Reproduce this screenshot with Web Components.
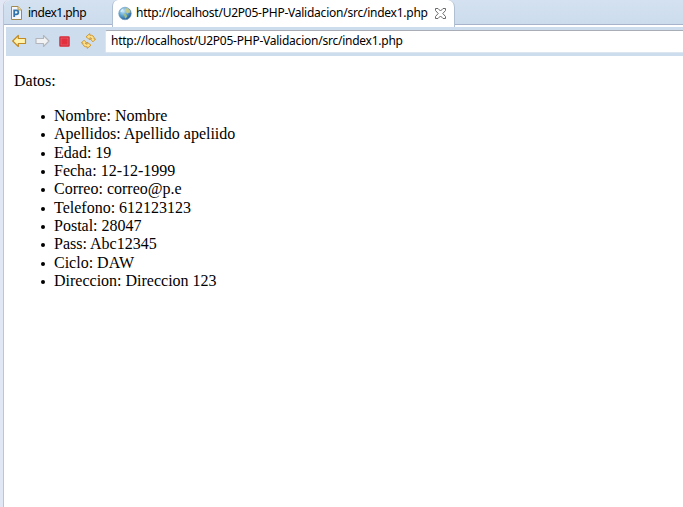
<!DOCTYPE html>
<html lang="es">
<head>
<meta charset="utf-8">
<title>index1.php</title>
<style>
html, body { margin: 0; height: 100%; overflow: hidden; background: #fff; }
</style>
</head>
<body>
<ide-window>
  <tab-bar slot="tabs">
    <editor-tab><ui-icon name="php" slot="icon"></ui-icon>index1.php</editor-tab>
    <editor-tab active><ui-icon name="globe" slot="icon"></ui-icon>http://localhost/U2P05-PHP-Validacion/src/index1.php<ui-icon name="close" slot="close"></ui-icon></editor-tab>
  </tab-bar>
  <nav-bar slot="toolbar" url="http://localhost/U2P05-PHP-Validacion/src/index1.php">
    <ui-icon name="back"></ui-icon>
    <ui-icon name="forward"></ui-icon>
    <ui-icon name="stop"></ui-icon>
    <ui-icon name="refresh"></ui-icon>
  </nav-bar>
  <data-page heading="Datos:">
    <data-item label="Nombre">Nombre</data-item>
    <data-item label="Apellidos">Apellido apeliido</data-item>
    <data-item label="Edad">19</data-item>
    <data-item label="Fecha">12-12-1999</data-item>
    <data-item label="Correo">correo@p.e</data-item>
    <data-item label="Telefono">612123123</data-item>
    <data-item label="Postal">28047</data-item>
    <data-item label="Pass">Abc12345</data-item>
    <data-item label="Ciclo">DAW</data-item>
    <data-item label="Direccion">Direccion 123</data-item>
  </data-page>
</ide-window>
<script>
const icons = {
  php: `<path d="M1.5 1.5H8L11.5 5V14.5H1.5Z" fill="#f4f8fd" stroke="#a08a50"/><path d="M8 1.5V5H11.5" fill="#e8d8a0" stroke="#b89a58"/><path d="M4.2 12V5.4H6.4A1.9 1.9 0 0 1 6.4 9.3H4.5" fill="none" stroke="#3275ad" stroke-width="1.8"/>`,
  globe: `<defs><radialGradient id="g" cx=".35" cy=".3" r=".75"><stop offset="0" stop-color="#cce8f8"/><stop offset=".5" stop-color="#5da3d2"/><stop offset="1" stop-color="#24588f"/></radialGradient></defs><circle cx="7" cy="7.5" r="6.3" fill="url(#g)" stroke="#6f9dc0" stroke-width=".6"/><path d="M7 2.4L9.6 2L12 4.5L12.4 7L11 6.6L9.6 7.8L8 6.2L7 4.5Z" fill="#c9cb84" opacity=".9"/><path d="M6.2 7.5L8 8.2L9.2 10.2L7.8 12.6L6.8 12L6.6 10.2L5.4 8.6Z" fill="#a9c27c" opacity=".9"/><path d="M2.2 5.4L4.3 2.9L5.4 3.4L3.8 6Z" fill="#e4f4fa" opacity=".8"/>`,
  close: `<path d="M1.5 1.5H4L6.5 4L9 1.5H11.5V3.5L8.8 6.5L11.5 9.5V11.5H9L6.5 9L4 11.5H1.5V9.5L4.2 6.5L1.5 3.5Z" fill="#fff" stroke="#696969"/>`,
  back: `<path d="M.7 7L6.3 1.5V4.5H13.5V9.5H6.3V12.5Z" fill="#fff3ae" stroke="#c48b20" stroke-width="1.2" stroke-linejoin="round"/>`,
  forward: `<path d="M14 7L8.5 1.5V4.5H1V9.5H8.5V12.5Z" fill="#f1f2f4" stroke="#b2b5bb" stroke-width="1.1" stroke-linejoin="round"/>`,
  stop: `<rect x="1.5" y="1.5" width="10" height="10" rx="1" fill="#d0283a" stroke="#d9555e"/><rect x="3" y="3" width="7" height="7" fill="#e2303f" stroke="#ee7077" stroke-width=".6"/>`,
  refresh: `<g fill="#ffdf85" stroke="#c8922c" stroke-width=".9" stroke-linejoin="round"><path d="M5 3.8L8.8 .6V2.2C11.6 1.8 13.4 3.6 13.2 6H14.6L12 8.8L9.2 6H10.6C10.6 5 10 4.7 8.8 4.9V6.8Z"/><path d="M10 12.2L6.2 15.4V13.8C3.4 14.2 1.6 12.4 1.8 10H.4L3 7.2L5.8 10H4.4C4.4 11 5 11.3 6.2 11.1V9.2Z"/></g>`
};
const sizes = { php: [13,16], globe: [14,15], close: [13,13], back: [15,14], forward: [15,14], stop: [13,13], refresh: [15,16] };
function define(name, render) {
  customElements.define(name, class extends HTMLElement {
    connectedCallback() {
      if (!this.shadowRoot) this.attachShadow({ mode: 'open' }).innerHTML = render(this);
    }
  });
}
define('ui-icon', el => {
  const name = el.getAttribute('name'), [w, h] = sizes[name];
  return `<style>:host{display:block;flex:none;width:${w}px;height:${h}px}:host([name=refresh]){margin-left:2px}svg{display:block}</style><svg width="${w}" height="${h}" viewBox="0 0 ${w} ${h}">${icons[name]}</svg>`;
});
define('editor-tab', el => `<style>
:host{display:flex;box-sizing:border-box;height:25px;width:108px;padding:2px 0 0 6px;align-items:center;border-bottom:1px solid #a7b2cb;border-top-left-radius:6px;font:12px/22px "Noto Sans","Open Sans",sans-serif;letter-spacing:-.5px;color:#000;white-space:nowrap}
:host([active]){width:343px;height:27px;padding:0 0 1px 5px;background:#fff;border:1px solid #b1bfd3;border-top:0;border-bottom:0;border-radius:6px 7px 0 0;letter-spacing:-.24px}
.label{margin-left:5px;flex:1;padding-bottom:1px}
:host([active]) .label{margin-left:4px}
::slotted([slot=close]){margin-right:7px}
</style><slot name="icon"></slot><span class="label"><slot></slot></span><slot name="close"></slot>`);
define('tab-bar', () => `<style>
:host{display:flex;height:27px;background:linear-gradient(#d3e1f0,#cddced 24px,#fff 25px);border-top-left-radius:6px}
.rest{flex:1;height:24px;border-bottom:1px solid #a7b2cb}
</style><slot></slot><span class="rest"></span>`);
define('nav-bar', el => `<style>
:host{display:flex;box-sizing:border-box;height:29px;margin-left:2px;padding:3px 0 3px 6px;background:#cddded}
.tools{display:flex;align-items:center;gap:8px;width:93px;padding-bottom:1px}
.url{flex:1;box-sizing:border-box;border:1px solid #dce6f0;border-top-color:#a9adb5;border-right:0;border-radius:2px 0 0 2px;background:#fff;padding-left:5px;font:12px/20px "Noto Sans","Open Sans",sans-serif;letter-spacing:-.24px;color:#000;white-space:nowrap}
</style><div class="tools"><slot></slot></div><div class="url">${el.getAttribute('url')}</div>`);
define('data-item', el => `<style>
:host{display:flex;line-height:18.35px}
.dot{flex:none;width:4px;height:4px;border-radius:50%;background:#000;margin:8px 9px 0 -13px}
</style><span class="dot"></span><span>${el.getAttribute('label')}: <slot></slot></span>`);
define('data-page', el => `<style>
:host{display:block;padding:16px 10px;font:16px/18.35px "Liberation Serif","Times New Roman",serif;color:#000}
p{margin:0 0 16.7px}
.list{padding-left:40px}
</style><p>${el.getAttribute('heading')}</p><div class="list"><slot></slot></div>`);
define('ide-window', () => `<style>
:host{display:block;box-sizing:border-box;height:100vh;padding-left:3px;background:#e1e7f5}
.frame{box-sizing:border-box;height:100%;border-left:1px solid #c5c2d0;background:#fff;border-top-left-radius:6px}
</style><div class="frame"><slot name="tabs"></slot><slot name="toolbar"></slot><slot></slot></div>`);
</script>
</body>
</html>
